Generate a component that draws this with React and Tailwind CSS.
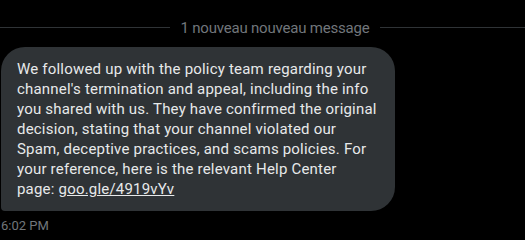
export default function App() {
  return (
    <div
      className="w-[525px] h-[240px] bg-black overflow-hidden flex flex-col"
      style={{ fontFamily: '"Segoe UI", Roboto, "Liberation Sans", sans-serif' }}
    >
      {/* New message divider (runs wider than the viewport, so centre sits right of middle) */}
      <div className="w-[550px] shrink-0 flex items-center gap-[10px] pt-[17px] h-[38px]">
        <div className="flex-1 h-px bg-[#2f3336]" />
        <span className="text-[15px] leading-[20px] text-[#71767b] tracking-[-0.2px]">1 nouveau nouveau message</span>
        <div className="flex-1 h-px bg-[#2f3336]" />
      </div>

      {/* Message bubble */}
      <div className="pl-px pt-[9px]">
        <div className="w-[394px] bg-[#2f3336] rounded-[24px] rounded-bl-[4px] px-4 py-3 text-[15px] leading-[20px] text-[#e7e9ea] tracking-[0.2px] whitespace-nowrap">
          We followed up with the policy team regarding your<br />
          channel's termination and appeal, including the info<br />
          you shared with us. They have confirmed the original<br />
          decision, stating that your channel violated our<br />
          Spam, deceptive practices, and scams policies. For<br />
          your reference, here is the relevant Help Center<br />
          page: <span className="underline">goo.gle/4919vYv</span>
        </div>
      </div>

      {/* Timestamp */}
      <div className="pl-px pt-[7px] text-[13px] leading-[16px] text-[#71767b]">6:02 PM</div>
    </div>
  )
}
